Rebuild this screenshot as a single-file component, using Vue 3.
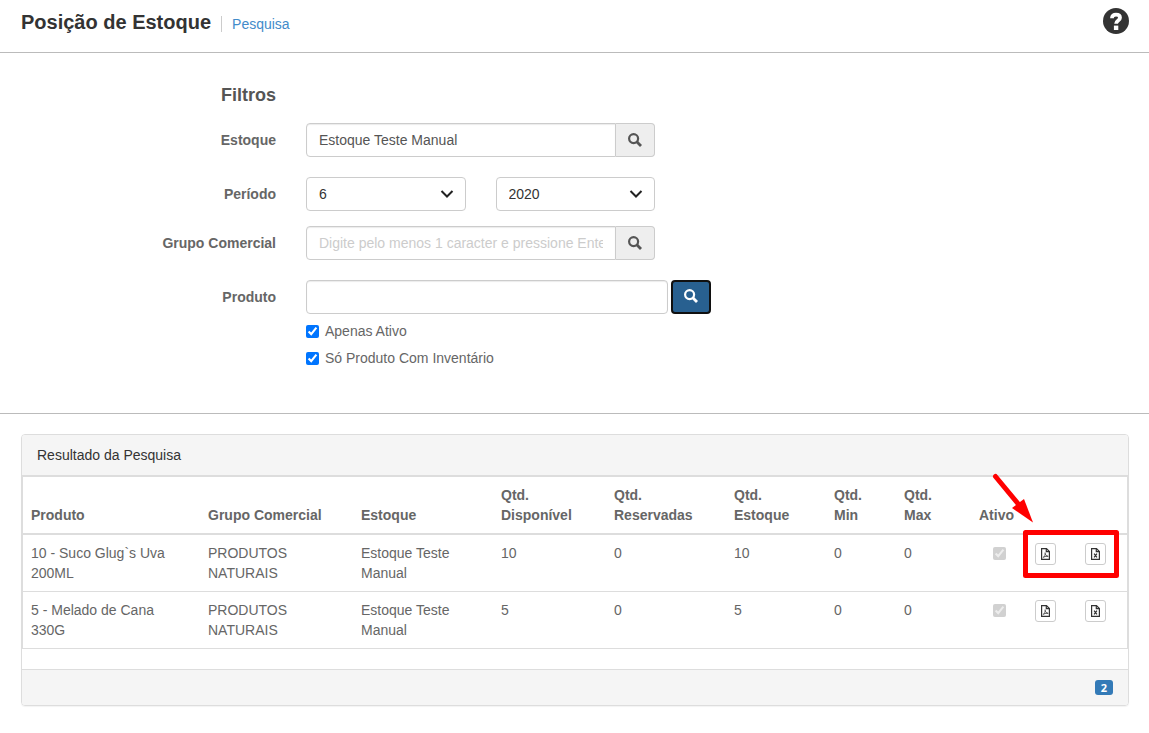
<script setup>
import { ref } from 'vue'

const estoque = ref('Estoque Teste Manual')
const mes = ref('6')
const ano = ref('2020')
const grupo = ref('')
const produto = ref('')
const apenasAtivo = ref(true)
const comInventario = ref(true)

const rows = [
  { id: 10, produto: '10 - Suco Glug`s Uva 200ML', grupo: 'PRODUTOS NATURAIS', estoque: 'Estoque Teste Manual', disponivel: 10, reservadas: 0, total: 10, min: 0, max: 0, ativo: true },
  { id: 5, produto: '5 - Melado de Cana 330G', grupo: 'PRODUTOS NATURAIS', estoque: 'Estoque Teste Manual', disponivel: 5, reservadas: 0, total: 5, min: 0, max: 0, ativo: true }
]
</script>

<template>
  <div class="page">
    <header class="topbar">
      <div class="heading">
        <h1>Posição de Estoque</h1>
        <a href="#" class="crumb">Pesquisa</a>
      </div>
      <button type="button" class="help" aria-label="Ajuda">
        <svg viewBox="0 0 26 26" width="26" height="26" aria-hidden="true">
          <circle cx="13" cy="13" r="13" fill="#333" />
          <path d="M9 10.2V10c0-2.300 1.600-3.400 4-3.400s4 1.100 4 3.100c0 2.900-3.900 2.600-3.900 6" fill="none" stroke="#fff" stroke-width="3.800" />
          <path d="M10.900 17.600h4.400v4.400h-4.400z" fill="#fff" />
        </svg>
      </button>
    </header>

    <form class="filters" @submit.prevent>
      <h2>Filtros</h2>

      <div class="row">
        <label for="estoque">Estoque</label>
        <div class="group">
          <input id="estoque" v-model="estoque" type="text" class="control" />
          <button type="button" class="addon" aria-label="Buscar estoque">
            <svg viewBox="0 0 14 14" width="14" height="14" aria-hidden="true"><circle cx="5.600" cy="5.600" r="4.500" /><path d="M8.800 8.800l4.200 4.200" /></svg>
          </button>
        </div>
      </div>

      <div class="row tight">
        <label for="mes">Período</label>
        <div class="period">
          <div class="select">
            <select id="mes" v-model="mes"><option>6</option></select>
            <svg viewBox="0 0 14 8" width="14" height="8" aria-hidden="true"><path d="M1.500 1l5.500 5.500L12.500 1" /></svg>
          </div>
          <div class="select">
            <select v-model="ano" aria-label="Ano"><option>2020</option></select>
            <svg viewBox="0 0 14 8" width="14" height="8" aria-hidden="true"><path d="M1.500 1l5.500 5.500L12.500 1" /></svg>
          </div>
        </div>
      </div>

      <div class="row">
        <label for="grupo">Grupo Comercial</label>
        <div class="group">
          <input id="grupo" v-model="grupo" type="text" class="control" placeholder="Digite pelo menos 1 caracter e pressione Enter" />
          <button type="button" class="addon" aria-label="Buscar grupo comercial">
            <svg viewBox="0 0 14 14" width="14" height="14" aria-hidden="true"><circle cx="5.600" cy="5.600" r="4.500" /><path d="M8.800 8.800l4.200 4.200" /></svg>
          </button>
        </div>
      </div>

      <div class="row last">
        <label for="produto">Produto</label>
        <div class="product">
          <input id="produto" v-model="produto" type="text" class="control" />
          <button type="submit" class="search" aria-label="Pesquisar">
            <svg viewBox="0 0 14 14" width="14" height="14" aria-hidden="true"><circle cx="5.600" cy="5.600" r="4.500" /><path d="M8.800 8.800l4.200 4.200" /></svg>
          </button>
        </div>
      </div>

      <div class="row checks">
        <div class="options">
          <label><input v-model="apenasAtivo" type="checkbox" />Apenas Ativo</label>
          <label><input v-model="comInventario" type="checkbox" />Só Produto Com Inventário</label>
        </div>
      </div>
    </form>

    <main class="results">
      <section class="panel">
        <h3>Resultado da Pesquisa</h3>
        <div class="table-wrap">
          <table>
            <colgroup>
              <col />
              <col class="w-grupo" />
              <col class="w-estoque" />
              <col class="w-disp" />
              <col class="w-res" />
              <col class="w-total" />
              <col class="w-limit" />
              <col class="w-limit" />
              <col class="w-ativo" />
              <col class="w-action" />
              <col class="w-action" />
            </colgroup>
            <thead>
              <tr>
                <th>Produto</th>
                <th>Grupo Comercial</th>
                <th>Estoque</th>
                <th>Qtd. Disponível</th>
                <th>Qtd. Reservadas</th>
                <th>Qtd. Estoque</th>
                <th>Qtd. Min</th>
                <th>Qtd. Max</th>
                <th class="center">Ativo</th>
                <th></th>
                <th></th>
              </tr>
            </thead>
            <tbody>
              <tr v-for="r in rows" :key="r.id">
                <td>{{ r.produto }}</td>
                <td>{{ r.grupo }}</td>
                <td>{{ r.estoque }}</td>
                <td>{{ r.disponivel }}</td>
                <td>{{ r.reservadas }}</td>
                <td>{{ r.total }}</td>
                <td>{{ r.min }}</td>
                <td>{{ r.max }}</td>
                <td class="center"><input type="checkbox" class="state" :checked="r.ativo" disabled aria-label="Ativo" /></td>
                <td>
                  <button type="button" class="file" aria-label="Exportar PDF">
                    <svg viewBox="0 0 9 12" width="9" height="12" aria-hidden="true">
                      <path d="M.600.600h4.900l2.900 2.900v7.900H.600z" />
                      <path d="M5.300 .600V3.700h3.100" />
                      <path class="thin" d="M4.100 4.500c.4 2-.3 4-2.300 5.300M4.200 5.500c.4 1.600 1.300 2.600 3 2.800-1.600-.2-3.100.1-4.500.7" />
                    </svg>
                  </button>
                </td>
                <td>
                  <button type="button" class="file" aria-label="Exportar Excel">
                    <svg viewBox="0 0 9 12" width="9" height="12" aria-hidden="true">
                      <path d="M.600.600h4.900l2.900 2.900v7.900H.600z" />
                      <path d="M5.300 .600V3.700h3.100" />
                      <path d="M3.100 5.600l2.800 3.700M5.900 5.600l-2.800 3.700" />
                    </svg>
                  </button>
                </td>
              </tr>
            </tbody>
          </table>
          <svg class="callout" viewBox="0 0 130 110" width="130" height="110" aria-hidden="true">
            <rect x="35.500" y="62.500" width="91" height="43" fill="none" stroke="#f00" stroke-width="5" stroke-linejoin="round" />
            <path d="M5.500 6.500l24 29" stroke="#f00" stroke-width="5" stroke-linecap="round" />
            <path d="M22 38l12-9L43 52.500z" fill="#f00" />
          </svg>
        </div>
        <footer><span class="count">2</span></footer>
      </section>
    </main>
  </div>
</template>

<style>
body {
  margin: 0;
  background: #fff;
}
</style>

<style scoped>
.page,
.page * {
  box-sizing: border-box;
}

.page {
  font: 14px/20px "Liberation Sans", Arial, sans-serif;
  color: #666;
}

button,
input,
select {
  font: inherit;
  margin: 0;
}

h1,
h2,
h3 {
  margin: 0;
}

.topbar {
  display: flex;
  justify-content: space-between;
  align-items: flex-start;
  padding: 8px 20px 16px 21px;
  border-bottom: 1px solid #bbb;
}

.heading {
  display: flex;
  align-items: center;
  gap: 10px;
}

h1 {
  font-size: 20px;
  line-height: 28px;
  color: #333;
}

.crumb {
  border-left: 1px solid #ccc;
  padding-left: 10px;
  line-height: 16px;
  margin-top: 4px;
  color: #428bca;
  text-decoration: none;
}

.help {
  border: 0;
  padding: 0;
  background: none;
}

.help svg {
  display: block;
}

.filters {
  padding: 30px 0 45px;
  border-bottom: 1px solid #bbb;
}

h2,
.row {
  display: grid;
  grid-template-columns: 276fr 349fr 464fr;
  column-gap: 30px;
}

h2 {
  font-size: 18px;
  line-height: 24px;
  margin-bottom: 16px;
  color: #555;
  text-align: right;
}

.row {
  align-items: center;
  margin-bottom: 20px;
}

.row.tight {
  margin-bottom: 15px;
}

.row.last {
  margin-bottom: 7px;
}

.row > label {
  text-align: right;
  font-weight: bold;
}

.row.checks {
  margin-bottom: 0;
}

.group,
.period,
.product {
  display: flex;
}

.period {
  gap: 30px;
}

.product {
  gap: 3px;
  width: calc(100% + 56px);
}

.control,
select {
  flex: 1;
  min-width: 0;
  height: 34px;
  padding: 6px 12px;
  border: 1px solid #ccc;
  border-radius: 4px;
  background: #fff;
  color: #555;
  outline: 0;
}

.control {
  box-shadow: inset 0 1px 1px rgba(0, 0, 0, 0.08);
}

.control::placeholder {
  color: #ccc;
  opacity: 1;
}

.group .control {
  border-radius: 4px 0 0 4px;
}

.addon,
.search {
  display: flex;
  align-items: center;
  justify-content: center;
  height: 34px;
  padding: 0;
}

.addon {
  width: 39px;
  border: 1px solid #ccc;
  border-left: 0;
  border-radius: 0 4px 4px 0;
  background: #eee;
  color: #555;
}

.search {
  width: 40px;
  padding-bottom: 2px;
  border: 2px solid #101010;
  border-radius: 4px;
  background: #286090;
  color: #fff;
}

.addon svg,
.search svg {
  fill: none;
  stroke: currentColor;
  stroke-width: 2.2;
}

.addon path,
.search path {
  stroke-width: 2.8;
}

.select {
  position: relative;
  display: flex;
  flex: 1;
}

select {
  appearance: none;
  color: #333;
}

.select svg {
  position: absolute;
  right: 12px;
  top: 13px;
  fill: none;
  stroke: #222;
  stroke-width: 2;
  pointer-events: none;
}

.options {
  grid-column: 2;
  display: flex;
  flex-direction: column;
  gap: 7px;
}

.options label {
  display: flex;
  align-items: center;
  gap: 6px;
}

.options input,
.state {
  width: 13px;
  height: 13px;
}

.results {
  padding: 20px 20px 26px 21px;
}

.panel {
  border: 1px solid #ddd;
  border-radius: 4px;
  box-shadow: 0 1px 1px rgba(0, 0, 0, 0.05);
}

h3 {
  padding: 10px 15px;
  border-bottom: 1px solid #ddd;
  border-radius: 3px 3px 0 0;
  background: #f5f5f5;
  font-size: 14px;
  font-weight: normal;
  color: #333;
}

.table-wrap {
  position: relative;
  border: 1px solid #ddd;
  margin-bottom: 20px;
}

table {
  width: 100%;
  table-layout: fixed;
  border-collapse: separate;
  border-spacing: 0;
}

.w-grupo { width: 153px; }
.w-estoque { width: 140px; }
.w-disp { width: 113px; }
.w-res { width: 120px; }
.w-total { width: 100px; }
.w-limit { width: 70px; }
.w-ativo { width: 61px; }
.w-action { width: 50px; }

th,
td {
  padding: 8px;
  text-align: left;
  vertical-align: top;
}

th {
  vertical-align: bottom;
  border-bottom: 2px solid #ddd;
}

tbody tr + tr td {
  border-top: 1px solid #ddd;
}

.center {
  text-align: center;
}

.state {
  display: block;
  margin: 4px auto 0 19px;
}

.file {
  display: flex;
  align-items: center;
  justify-content: center;
  width: 21px;
  height: 22px;
  padding: 0;
  border: 1px solid #ccc;
  border-radius: 3px;
  background: #fff;
}

.file svg {
  fill: none;
  stroke: #333;
  stroke-width: 1.2;
}

.file .thin {
  stroke-width: 0.8;
}

.callout {
  position: absolute;
  top: -7px;
  right: 7px;
  pointer-events: none;
}

footer {
  display: flex;
  justify-content: flex-end;
  padding: 10px 15px;
  border-top: 1px solid #ddd;
  border-radius: 0 0 3px 3px;
  background: #f5f5f5;
}

.count {
  min-width: 18px;
  border-radius: 3px;
  background: #337ab7;
  color: #fff;
  font: bold 11px/15px "Open Sans", sans-serif;
  text-align: center;
}
</style>
